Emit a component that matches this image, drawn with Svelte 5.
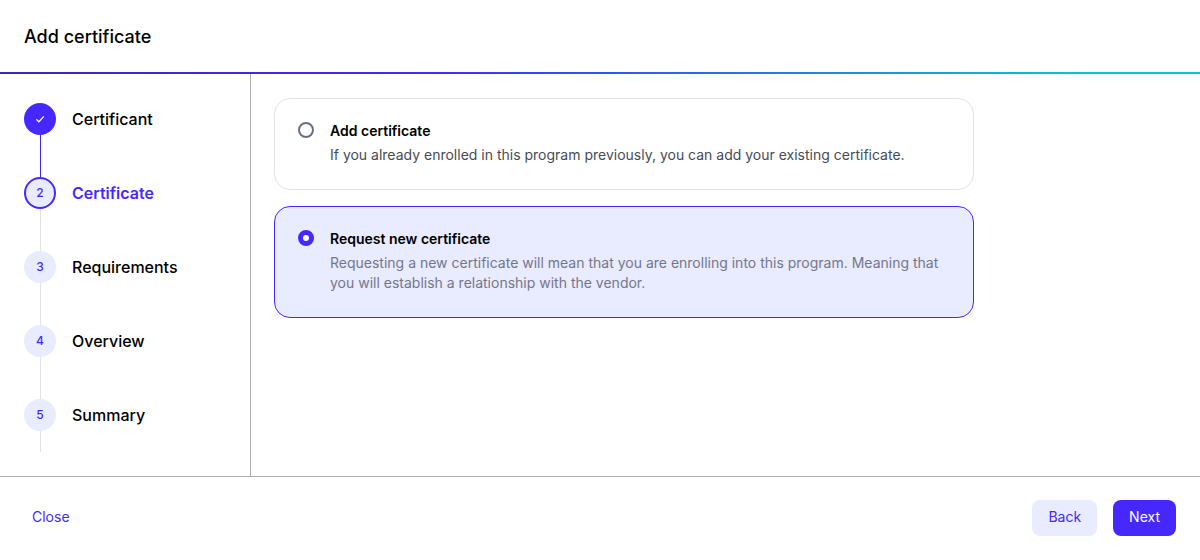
<script>
  const steps = ['Certificant', 'Certificate', 'Requirements', 'Overview', 'Summary'];
  const current = 1;
  const options = [
    { value: 'add', title: 'Add certificate', text: 'If you already enrolled in this program previously, you can add your existing certificate.' },
    { value: 'request', title: 'Request new certificate', text: 'Requesting a new certificate will mean that you are enrolling into this program. Meaning that you will establish a relationship with the vendor.' }
  ];
  let choice = $state('request');
</script>

<div class="page">
  <header><h1>Add certificate</h1></header>
  <div class="body">
    <nav aria-label="Progress">
      <ol>
        {#each steps as step, i}
          <li class:done={i < current} class:current={i === current} aria-current={i === current ? 'step' : undefined}>
            <div class="rail">
              <span class="dot">
                {#if i < current}
                  <svg viewBox="0 0 16 16" width="16" height="16" aria-hidden="true"><path d="M4.4 8.4 6.9 10.8 11.8 5.4" fill="none" stroke="currentColor" stroke-width="1.3" /></svg>
                {:else}{i + 1}{/if}
              </span>
              <span class="line"></span>
            </div>
            <span class="name">{step}</span>
          </li>
        {/each}
      </ol>
    </nav>
    <main>
      {#each options as option}
        <label class="card" class:selected={choice === option.value}>
          <input type="radio" name="choice" value={option.value} bind:group={choice} />
          <span class="copy">
            <span class="title">{option.title}</span>
            <span class="text">{option.text}</span>
          </span>
        </label>
      {/each}
    </main>
  </div>
  <footer>
    <button class="plain">Close</button>
    <div class="actions">
      <button class="soft">Back</button>
      <button class="solid">Next</button>
    </div>
  </footer>
</div>

<style>
  .page {
    --accent: #4628ff;
    --tint: #e9ebff;
    box-sizing: border-box;
    display: flex;
    flex-direction: column;
    min-height: 100vh;
    background: #fff;
    color: #000;
    font-family: Inter, "Liberation Sans", sans-serif;
    font-size: 14px;
    line-height: 20px;
  }
  header {
    padding: 25px 24px 23px;
    border-bottom: 2px solid;
    border-image: linear-gradient(90deg, #4026b4 0%, #4628ff 36%, #00c8d0 90%) 1;
  }
  h1 { margin: 0; font-size: 18px; line-height: 24px; font-weight: 500; }
  .body { display: flex; flex: 1; }
  nav { box-sizing: border-box; width: 251px; flex: none; padding: 29px 24px 24px; border-right: 1px solid #a9a9b8; }
  ol { margin: 0; padding: 0; list-style: none; }
  li { display: flex; gap: 16px; height: 74px; }
  .rail { display: flex; flex-direction: column; align-items: center; }
  .dot {
    box-sizing: border-box;
    display: grid;
    place-items: center;
    width: 32px;
    height: 32px;
    border-radius: 50%;
    background: var(--tint);
    color: var(--accent);
    font-size: 12px;
    font-weight: 500;
  }
  .line { flex: 1; width: 1px; background: #dfe3e4; }
  .done .dot, .done .line { background: var(--accent); color: #fff; }
  .current .dot { border: 2px solid var(--accent); }
  .name { font-size: 16px; line-height: 32px; font-weight: 500; }
  .current .name { color: var(--accent); font-weight: 600; }
  li:last-child { height: 53px; }
  main { flex: 1; display: flex; flex-direction: column; gap: 16px; padding: 24px 24px 24px 23px; }
  .card {
    box-sizing: border-box;
    display: flex;
    align-items: flex-start;
    gap: 16px;
    max-width: 700px;
    padding: 22px 23px 24px;
    border: 1px solid #dfe3e4;
    border-radius: 16px;
    cursor: pointer;
  }
  .selected { border-color: var(--accent); background: var(--tint); }
  input {
    appearance: none;
    box-sizing: border-box;
    flex: none;
    width: 16px;
    height: 16px;
    margin: 1px 0 0;
    border: 2px solid #6b6f85;
    border-radius: 50%;
    background: #fff;
  }
  input:checked { border: 5px solid var(--accent); }
  .copy { display: flex; flex-direction: column; gap: 4px; }
  .title { font-weight: 600; }
  .text { color: #474b57; }
  .selected .text { color: #74778c; }
  footer { display: flex; justify-content: space-between; padding: 23px 24px 24px; border-top: 1px solid #a9a9b8; }
  .actions { display: flex; gap: 16px; }
  button { padding: 7px 16px 9px; border: 0; border-radius: 8px; font: inherit; color: var(--accent); background: var(--tint); cursor: pointer; }
  .plain { padding: 7px 8px 9px; background: none; }
  .solid { color: #fff; background: var(--accent); }
</style>
